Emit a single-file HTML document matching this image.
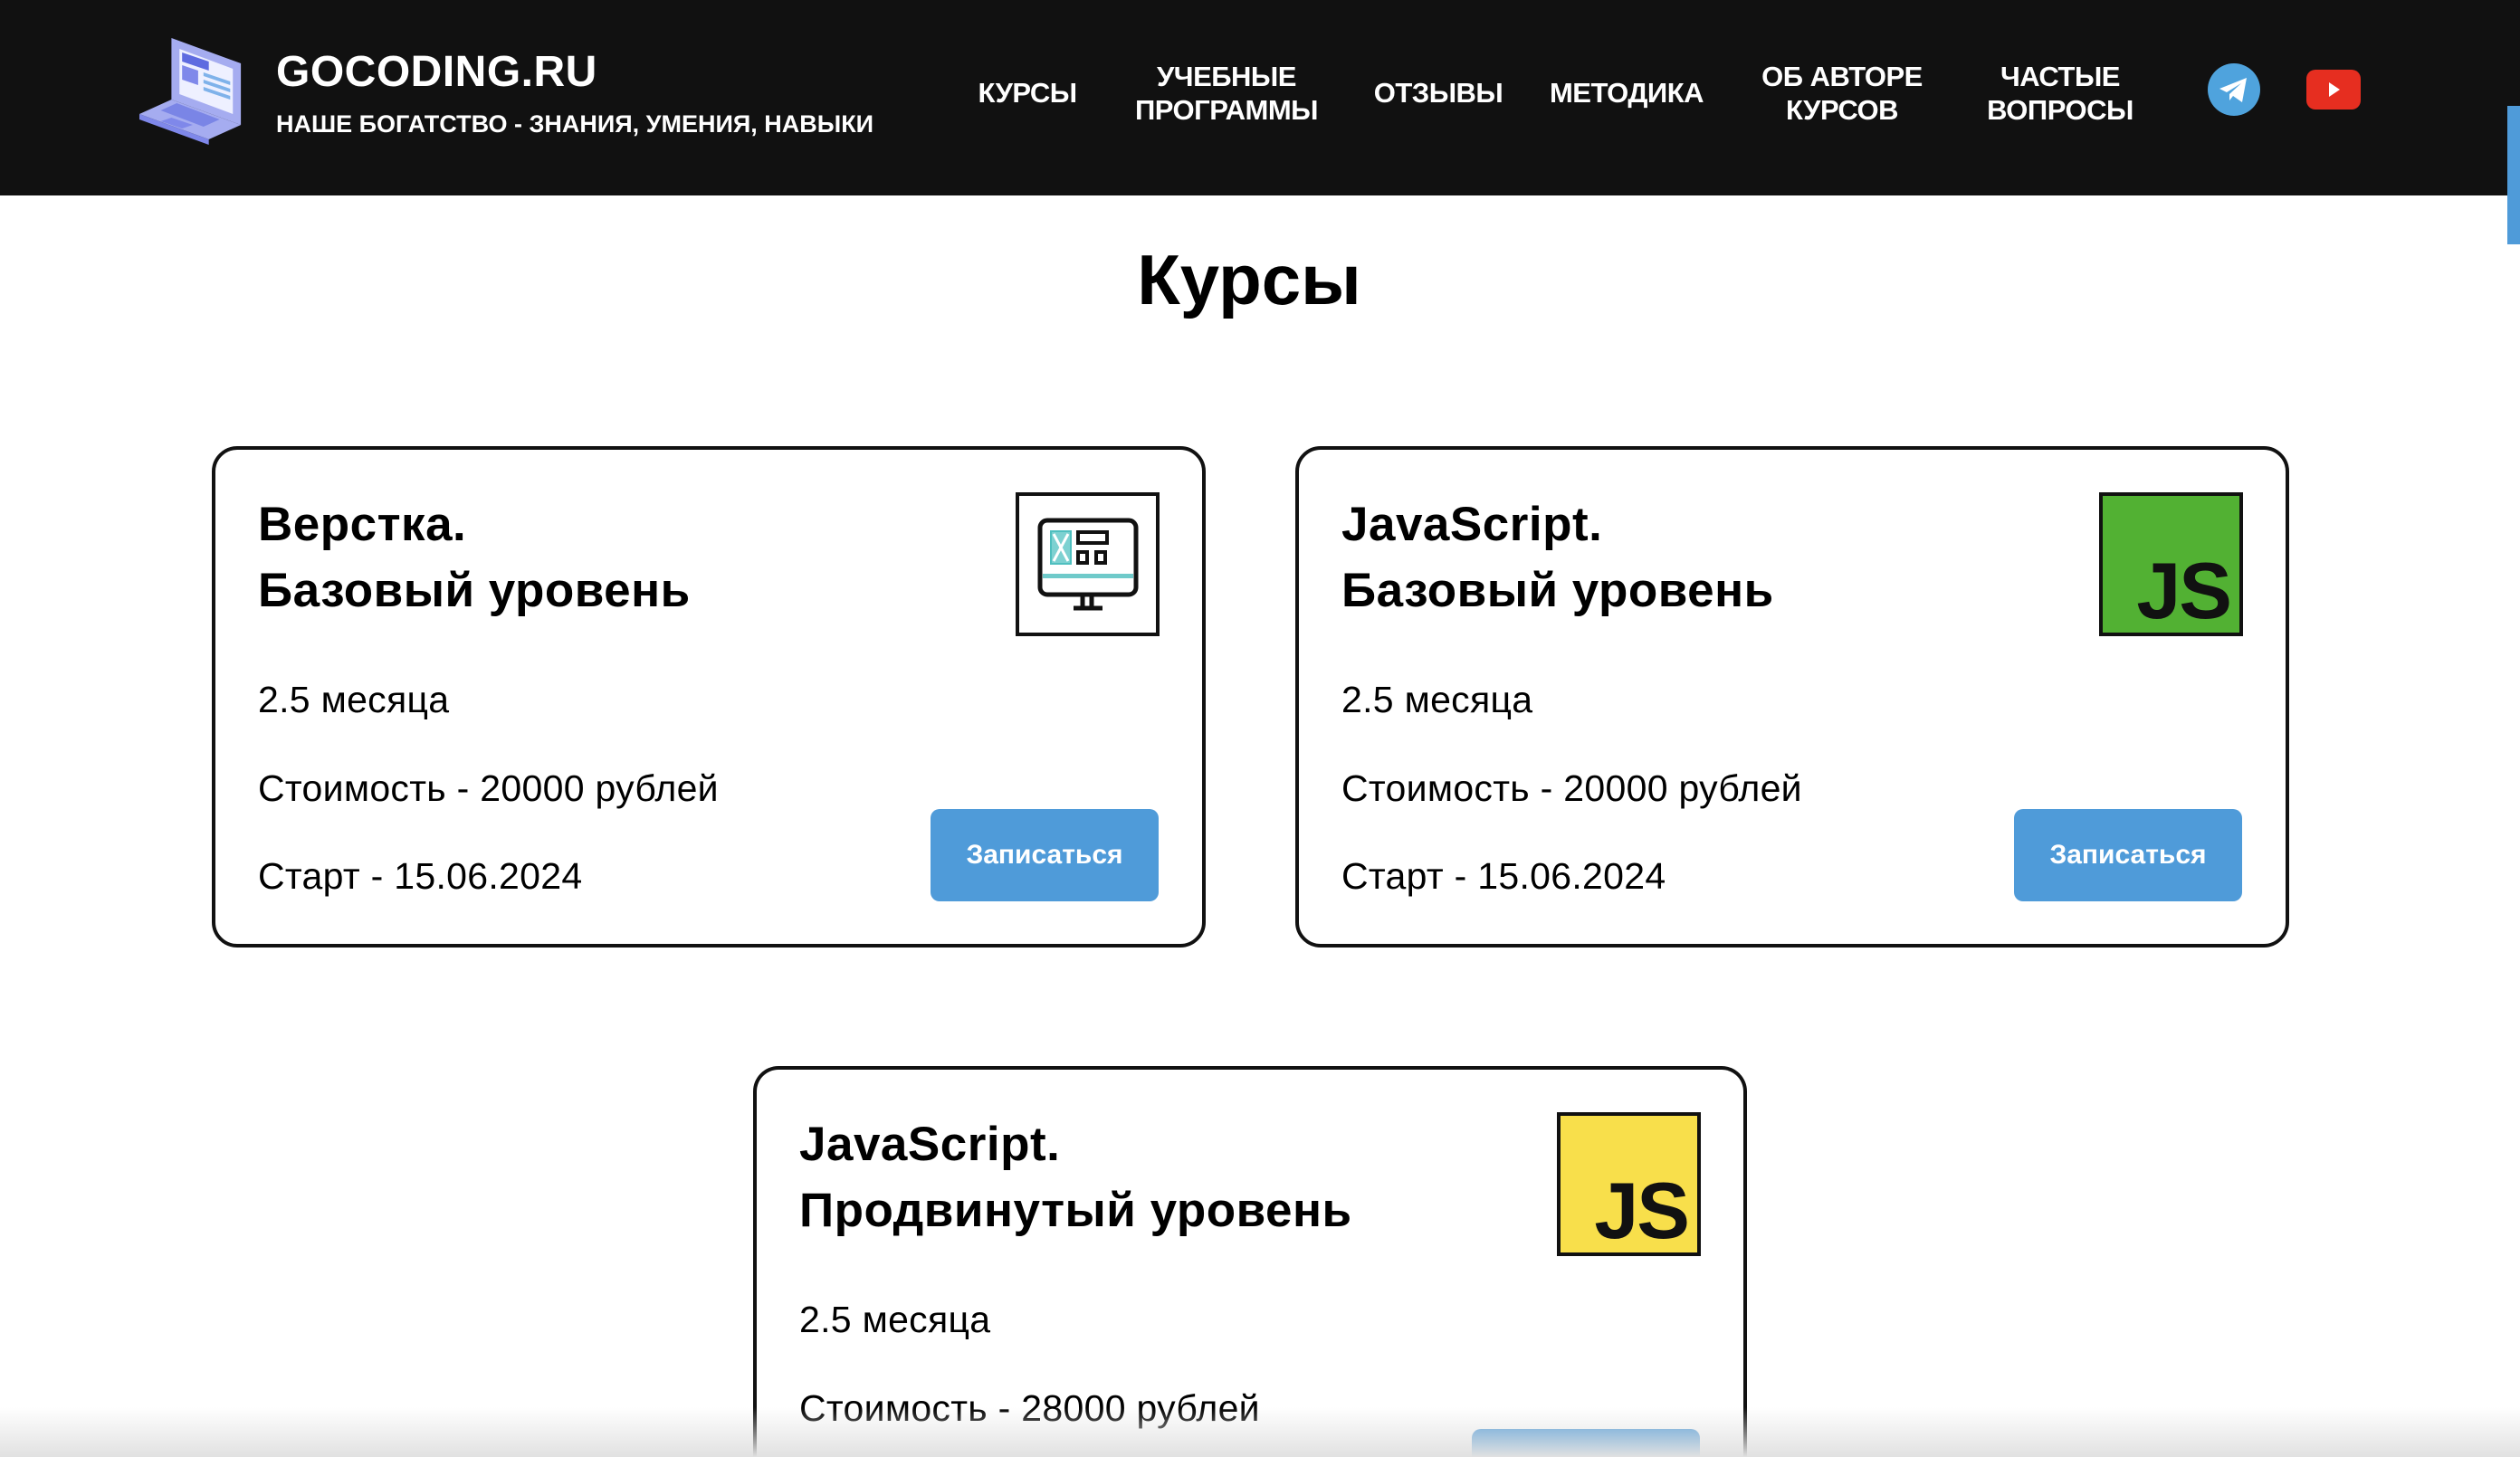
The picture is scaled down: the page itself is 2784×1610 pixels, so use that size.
<!DOCTYPE html>
<html style="width:2784px;height:1610px;overflow:hidden"><head><meta charset="utf-8"><style>
*{margin:0;padding:0;box-sizing:border-box}
body{width:2784px;height:1610px;overflow:hidden;background:#fff;font-family:"Liberation Sans","Noto Sans CJK SC",sans-serif;color:#000}
#w{position:relative;width:2784px;height:1610px;overflow:hidden}
.hdr{position:absolute;left:0;top:0;width:2784px;height:216px;background:#111}
.a{position:absolute}
.nav{position:absolute;color:#fff;font-weight:bold;font-size:31px;line-height:37px;text-align:center;transform:translateX(-50%);white-space:nowrap;letter-spacing:-0.5px}
.card{position:absolute;width:1098px;height:554px;border:4px solid #111;border-radius:28px;background:#fff;overflow:hidden}
.t{position:absolute;left:47px;top:46px;font-weight:bold;font-size:53px;line-height:73px;letter-spacing:0.5px}
.p{position:absolute;left:47px;font-size:41px;line-height:48px;letter-spacing:0.3px}
.ic{position:absolute;left:884px;top:47px;width:159px;height:159px;border:4px solid #111}
.js{display:flex;align-items:flex-end;justify-content:flex-end;padding:0 10px 2px 0;font-weight:bold;font-size:88px;line-height:88px;letter-spacing:-2px;color:#111}
.btn{position:absolute;left:790px;top:397px;width:252px;height:102px;background:#4f9bd9;border-radius:10px;color:#fff;font-weight:bold;font-size:30px;display:flex;align-items:center;justify-content:center}
</style></head><body><div id="w">
<div class="hdr"></div>
<svg class="a" style="left:154px;top:38px" width="118" height="124" viewBox="0 0 40 62" preserveAspectRatio="none">
<polygon points="12,2 38,16 38,50 12,36" fill="#a5acf0"/>
<polygon points="15,8 35,19 35,44 15,33" fill="#eef0ff"/>
<polygon points="16,10 26,15 26,20 16,15" fill="#5e6be0"/>
<polygon points="16,17 22,20 22,28 16,25" fill="#7f88ea"/>
<polygon points="24,21 34,26 34,28 24,23" fill="#7fb2ea"/>
<polygon points="24,25 34,30 34,32 24,27" fill="#7fb2ea"/>
<polygon points="24,29 34,34 34,36 24,31" fill="#7fb2ea"/>
<polygon points="0,44 12,36 38,50 26,58" fill="#a5acf0"/>
<polygon points="0,44 26,58 26,61 0,47" fill="#7f88ea"/>
<polygon points="8,42 14,38 30,47 24,51" fill="#5e6be0" opacity=".6"/>
<polygon points="8,48 12,46 20,50 16,52" fill="#7f88ea"/>
</svg>
<div class="a" style="left:305px;top:52px;color:#fff;font-weight:bold;font-size:48px;line-height:56px;letter-spacing:0.5px">GOCODING.RU</div>
<div class="a" style="left:305px;top:120px;color:#fff;font-weight:bold;font-size:27px;line-height:34px">НАШЕ БОГАТСТВО - ЗНАНИЯ, УМЕНИЯ, НАВЫКИ</div>
<div class="nav" style="left:1135px;top:84px">КУРСЫ</div>
<div class="nav" style="left:1355px;top:66px">УЧЕБНЫЕ<br>ПРОГРАММЫ</div>
<div class="nav" style="left:1589px;top:84px">ОТЗЫВЫ</div>
<div class="nav" style="left:1797px;top:84px">МЕТОДИКА</div>
<div class="nav" style="left:2035px;top:66px">ОБ АВТОРЕ<br>КУРСОВ</div>
<div class="nav" style="left:2276px;top:66px">ЧАСТЫЕ<br>ВОПРОСЫ</div>
<svg class="a" style="left:2438px;top:69px" width="60" height="60" viewBox="0 0 60 60"><circle cx="30" cy="30" r="29" fill="#4fa3dd"/><path d="M14 29 L44 17 L39 44 L29 37 L25 42 L25 35 L38 23 L22 33 Z" fill="#fff"/></svg>
<svg class="a" style="left:2548px;top:77px" width="60" height="44" viewBox="0 0 60 44"><rect width="60" height="44" rx="10" fill="#e62e20"/><path d="M25 14 L37 22 L25 30 Z" fill="#fff"/></svg>
<div class="a" style="left:2770px;top:117px;width:14px;height:153px;background:#4f9bd9"></div>
<div class="a" style="left:0;top:264px;width:2760px;text-align:center;font-weight:bold;font-size:78px;line-height:90px">Курсы</div>

<div class="card" style="left:234px;top:493px">
<div class="t">Верстка.<br>Базовый уровень</div>
<div class="p" style="top:252px">2.5 месяца</div>
<div class="p" style="top:350px">Стоимость - 20000 рублей</div>
<div class="p" style="top:447px">Старт - 15.06.2024</div>
<div class="ic"><svg width="151" height="151" viewBox="0 0 151 151">
<rect x="23" y="27" width="106" height="82" rx="8" fill="none" stroke="#111" stroke-width="5"/>
<rect x="35" y="39" width="22" height="36" fill="#7dd1d1" stroke="#4fbfbf" stroke-width="2"/>
<path d="M38 42 L54 72 M54 42 L38 72" stroke="#fff" stroke-width="3"/>
<rect x="65" y="40" width="32" height="12" fill="none" stroke="#111" stroke-width="4"/>
<rect x="65" y="62" width="10" height="12" fill="none" stroke="#111" stroke-width="4"/>
<rect x="85" y="62" width="10" height="12" fill="none" stroke="#111" stroke-width="4"/>
<rect x="26" y="86" width="100" height="5" fill="#6fcaca"/>
<path d="M70 109 V122 M80 109 V122 M60 124 H92" stroke="#111" stroke-width="5"/>
</svg></div>
<div class="btn">Записаться</div>
</div>

<div class="card" style="left:1431px;top:493px">
<div class="t">JavaScript.<br>Базовый уровень</div>
<div class="p" style="top:252px">2.5 месяца</div>
<div class="p" style="top:350px">Стоимость - 20000 рублей</div>
<div class="p" style="top:447px">Старт - 15.06.2024</div>
<div class="ic js" style="background:#52b133">JS</div>
<div class="btn">Записаться</div>
</div>

<div class="card" style="left:832px;top:1178px;height:432px;border-bottom:none;border-radius:28px 28px 0 0">
<div class="t">JavaScript.<br>Продвинутый уровень</div>
<div class="p" style="top:252px">2.5 месяца</div>
<div class="p" style="top:350px">Стоимость - 28000 рублей</div>
<div class="ic js" style="background:#f8df4b">JS</div>
<div class="btn">Записаться</div>
</div>
<div class="a" style="left:0;top:1555px;width:2784px;height:55px;background:linear-gradient(rgba(230,230,230,0),rgba(225,225,225,1))"></div>
</div></body></html>
